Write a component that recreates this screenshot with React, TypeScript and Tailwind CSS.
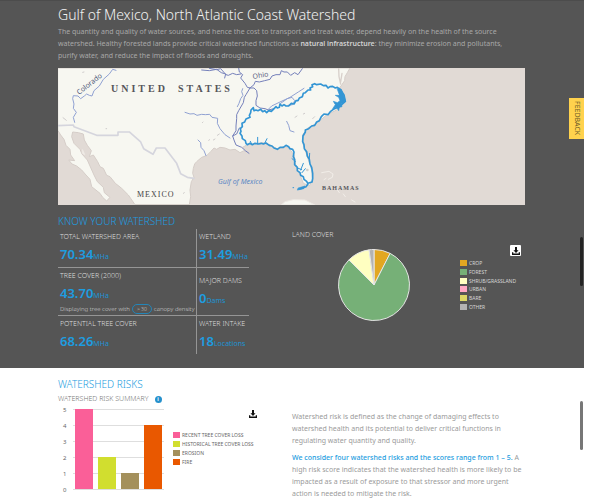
import type { ReactNode } from 'react';

type LegendItem = { label: string; color: string };

const LAND_COVER: LegendItem[] = [
  { label: 'CROP', color: '#e2a722' },
  { label: 'FOREST', color: '#76b077' },
  { label: 'SHRUB/GRASSLAND', color: '#ffffc1' },
  { label: 'URBAN', color: '#ffa8c4' },
  { label: 'BARE', color: '#dbd765' },
  { label: 'OTHER', color: '#b3b3b3' },
];

const RISKS = [
  { label: 'RECENT TREE COVER LOSS', color: '#fa5f98', value: 5 },
  { label: 'HISTORICAL TREE COVER LOSS', color: '#d1de2f', value: 2 },
  { label: 'EROSION', color: '#a4905c', value: 1 },
  { label: 'FIRE', color: '#e95800', value: 4 },
];

const SLICES = [
  { from: 0, to: 27, color: '#e2a722' },
  { from: 27, to: 315, color: '#76b077' },
  { from: 315, to: 352, color: '#ffffc1' },
  { from: 352, to: 360, color: '#b3b3b3' },
];

function slicePath(from: number, to: number) {
  const r = 35.5;
  const point = (deg: number) => {
    const a = (deg * Math.PI) / 180;
    return `${36 + r * Math.sin(a)} ${36 - r * Math.cos(a)}`;
  };
  return `M36 36L${point(from)}A${r} ${r} 0 ${to - from > 180 ? 1 : 0} 1 ${point(to)}Z`;
}

function DownloadIcon() {
  return (
    <svg viewBox="0 0 8 8" className="size-2" aria-hidden="true">
      <path d="M3 0h2v3.2h1.6L4 5.9 1.4 3.2H3z" fill="#111" />
      <path d="M0 5.2h1.3v1.3h5.4V5.2H8V8H0z" fill="#111" />
    </svg>
  );
}

function Legend({ items, className }: { items: LegendItem[]; className: string }) {
  return (
    <ul className={`flex flex-col justify-between text-[5px] leading-[6px] whitespace-nowrap ${className}`}>
      {items.map((item) => (
        <li key={item.label} className="flex items-center gap-0.5">
          <span className="h-1.5 w-[7px]" style={{ backgroundColor: item.color }} />
          {item.label}
        </li>
      ))}
    </ul>
  );
}

function Stat({ label, value, unit, className, children }: { label: string; value: string; unit: string; className: string; children?: ReactNode }) {
  return (
    <div className={`border-[#959595] ${className}`}>
      <h3 className="text-[7px] leading-[10px] font-light whitespace-nowrap text-[#dcdcdc]">{label}</h3>
      <p className="mt-1 text-[13px] leading-4 font-semibold whitespace-nowrap text-[#1d9de0]">
        {value}
        <span className="text-[7px] font-normal text-[#1d94d4]">{unit}</span>
      </p>
      {children}
    </div>
  );
}

function WatershedMap() {
  return (
    <svg viewBox="0 0 467 137" className="block w-full bg-[#e1dad5]" role="img" aria-label="Watershed map">
      <g transform="translate(-8 -8) scale(0.33333)" fill="none" strokeLinejoin="round" strokeLinecap="round">
        <path
          d="M24 24H900L892 38 885 50 884 62 875 75 868 85 885 125 860 150 830 165 800 190 772 205 758 225 760 255 772 290 785 330 788 360 778 378 760 370 750 345 738 320 732 285 715 262 700 260 685 268 660 255 640 248 620 250 590 255 578 262 592 276 582 272 570 278 555 268 540 270 525 264 510 262 500 268 492 264 482 275 470 287 455 292 440 305 434 312 430 325 428 340 432 352 424 365 420 390 422 410 418 434H255L235 405 215 385 196 370 180 350 170 346 160 325 150 320 143 305 130 285 118 290 124 272 112 256 103 240 100 222 85 218 68 216 65 230 72 250 90 268 96 282 112 300 120 318 132 345 142 365 160 382 163 398 180 412 170 423 158 412 150 400 125 380 120 358 108 345 95 330 80 318 66 312 56 300 74 302 62 285 60 268 48 256 42 238 32 225 24 212Z"
          fill="#f7f7f1"
          stroke="#d5cdc8"
          strokeWidth="3"
        />
        <path d="M98 270l6 14-6-4zM695 434l10-9 25-6 35 1 28 14z" fill="#f7f7f1" stroke="#eee9e4" strokeWidth="3" />
        <path d="M815 338l22-4 12 8-2 10-12 6M862 390l6 8M880 402l6 8M905 420l10 6M828 355l-6 4" stroke="#f1ede8" strokeWidth="3" />
        <path d="M866 26l1 24 5 22M876 40l-4 26" stroke="#d8d0cb" strokeWidth="4" />
        <path d="M24 197L70 195 72 200 140 226H204V216H238L272 246 281 266 309 283 319 264H345L380 310 392 341 412 352 432 355" stroke="#d5d5dd" strokeWidth="5" />
        <path d="M39 173l10 8M98 37l4-1M168 206h2M490 240l5-3M502 226l6-4M476 241l3-2M457 188l2-2M400 400l3-2M760 162l4-2M788 176l6-6M735 172l6-4" stroke="#cfcccc" strokeWidth="3" />
        <path
          d="M198 31L188 28 178 42 160 58 148 78 132 92 126 108 118 106 110 102 103 108 92 116 84 108 70 107 68 116 72 132 70 145 79 157 70 172 74 187M405 157L420 162 432 161 441 166 455 163 466 164 479 163 486 172 503 175 502 190 510 206 525 224 540 234M444 240L452 248 453 262 462 272 468 287M578 86L575 95 579 106 572 116 567 130 562 140M710 184L716 196 720 212 732 216M655 148L665 138 690 126 720 112 745 96 762 85M692 130l20-14 14-4 8 10-6 12-14 2"
          stroke="#90a1d2"
          strokeWidth="3"
        />
        <path
          d="M455 30L478 32 500 28 514 38 527 42 524 54M478 25L500 29 512 26 528 44 535 46 548 40 560 44 572 42M566 24L568 36 578 44 572 54 585 70 592 82 600 84 588 104 583 112 580 128 566 152 560 164 560 176 558 198 558 212 548 228 552 240 558 255 575 262 586 272 597 280M600 84L612 74 616 64 628 66 644 62 660 58 666 48 678 44 690 44 694 32 702 36 712 36 722 46 734 38 744 44 757 26M600 84L612 84 620 92 622 108 618 122 618 136 630 144 645 146 655 150 672 146M548 228L560 222 568 204"
          stroke="#7480ba"
          strokeWidth="3"
        />
        <path
          d="M871 88L862 82 856 84 848 79 840 80 834 84 828 76 820 77 812 72 800 74 794 71 786 74 788 80 780 84 782 90 774 90 766 98 760 100 757 110 748 114 744 122 738 122 732 132 724 130 716 138 708 138 702 134 696 138 690 132 688 142 682 144 678 140 670 148 664 154 656 152 650 158 644 152 638 155 632 148 624 152 618 150 612 152 610 143 603 150 602 158 598 166 600 172 588 177 584 186 576 190 577 200 571 206 573 214 570 220 576 228 577 236 586 242 588 250 592 254 600 250 607 254 615 250 626 252 634 250 640 252 648 249 658 256 666 258 672 264 682 268 690 262 700 262 708 256 716 260 720 266 728 268 732 276 730 290 734 298 734 314 742 322 742 332 750 338 752 346 760 350 762 358 770 364 774 372 768 380 758 384 748 387M774 370L786 366 788 356 788 340 785 322 780 312 778 298 772 288 770 275 763 266 762 254 758 245 759 228 766 216 766 210 776 206 785 198 794 196 800 186 808 182 814 170 822 162 834 164 842 154 850 148 868 140 886 124 882 105 871 88"
          stroke="#3395d4"
          strokeWidth="5"
        />
        <path d="M862 86L874 88 880 104 887 124 874 132 876 140 868 142 866 152 860 142 848 146 856 134 850 124 862 128 870 122 866 112 856 106 868 106z" fill="#3395d4" stroke="#3395d4" strokeWidth="2" />
        <path d="M745 384l20-6-4 8-18 4z" fill="#3395d4" stroke="#3395d4" strokeWidth="2" />
        <path d="M623 252V232M645 248l6-12M605 252l-4-8M752 330l8-20M745 325l10 4M756 338l10-12M778 296l1-16M729 383h2M726 296l10 8" stroke="#3395d4" strokeWidth="3" />
        <circle cx="772" cy="330" r="4" fill="#d4d0cc" />
      </g>
      <g className="font-['Liberation_Serif',serif]" fill="#55555a">
        <text y="24" className="text-[10px] font-bold tracking-[3px]">
          <tspan x="53">UNITED</tspan> <tspan x="120">STATES</tspan>
        </text>
        <text x="79" y="129" className="text-[8px] tracking-[1px]" fill="#444">MEXICO</text>
        <text x="264" y="122" className="text-[6px] font-bold tracking-[1px]">BAHAMAS</text>
      </g>
      <g className="font-['Noto_Sans',sans-serif] text-[7px]">
        <text transform="translate(21 27) rotate(-38)" fill="#4c5578">Colorado</text>
        <text transform="translate(195 11) rotate(-10)" fill="#5c6482">Ohio</text>
        <text x="160" y="116" className="italic" fill="#5b87c4">Gulf of Mexico</text>
      </g>
    </svg>
  );
}

function LandCoverPie() {
  return (
    <svg viewBox="0 0 72 72" className="mt-2 ml-[46px] size-[72px]" role="img" aria-label="Land cover shares">
      {SLICES.map((s) => (
        <path key={s.from} d={slicePath(s.from, s.to)} fill={s.color} stroke="#e6e6e6" strokeWidth="1" strokeLinejoin="round" />
      ))}
    </svg>
  );
}

function RiskChart() {
  return (
    <svg viewBox="0 0 108 90" className="h-[90px] w-[108px] text-[6px]" role="img" aria-label="Watershed risk scores">
      {[0, 1, 2, 3, 4, 5].map((n) => (
        <g key={n}>
          <path d={`M15 ${85.5 - n * 16}H106`} stroke="#dedede" />
          <text x="5" y={88 - n * 16} fill="#666">{n}</text>
        </g>
      ))}
      {RISKS.map((risk, i) => (
        <rect key={risk.label} x={17 + i * 23} y={85 - risk.value * 16} width="18" height={risk.value * 16} fill={risk.color} />
      ))}
    </svg>
  );
}

export default function App() {
  return (
    <div className="relative bg-white font-['Noto_Sans',sans-serif]">
      <main className="mr-1.5">
        <section className="border-t border-[#4c4c4c] bg-[#555555] pt-1 pr-[59px] pb-[14px] pl-[58px]">
          <h1 className="text-[14px] leading-5 font-light text-[#f2f2f2]">Gulf of Mexico, North Atlantic Coast Watershed</h1>
          <p className="mt-px max-w-[458px] text-[7px] leading-3 text-[#a8a8a8]">
            The quantity and quality of water sources, and hence the cost to transport and treat water, depend heavily on the health of the source
            watershed. Healthy forested lands provide critical watershed functions as{' '}
            <strong className="font-semibold text-[#d2d2d2]">natural infrastructure</strong>: they minimize erosion and pollutants, purify water, and
            reduce the impact of floods and droughts.
          </p>
          <div className="mt-1.5">
            <WatershedMap />
          </div>

          <div className="mt-2 grid grid-cols-[234px_1fr]">
            <div>
              <h2 className="text-[10px] leading-4 font-light text-[#1d9de0]">KNOW YOUR WATERSHED</h2>
              <div className="grid w-[191px] grid-cols-[139px_1fr] grid-rows-[39px_48px_38px]">
                <Stat className="border-r border-b pt-[3px] pl-0.5" label="TOTAL WATERSHED AREA" value="70.34" unit="MHa" />
                <Stat className="border-b pt-[3px] pl-0.5" label="WETLAND" value="31.49" unit="MHa" />
                <Stat className="border-r border-b pt-[3px] pl-0.5" label="TREE COVER (2000)" value="43.70" unit="MHa">
                  <p className="flex items-center gap-0.5 text-[6px] leading-[10px] font-light whitespace-nowrap text-[#d0d0d0]">
                    Displaying tree cover with
                    <button type="button" className="h-[10px] w-5 rounded-full border border-[#2386b9] text-[5px] leading-[8px]">&gt; 30</button>
                    canopy density
                  </p>
                </Stat>
                <Stat className="border-b pt-2 pl-0.5" label="MAJOR DAMS" value="0" unit="Dams" />
                <Stat className="border-r pt-[3px] pl-0.5" label="POTENTIAL TREE COVER" value="68.26" unit="MHa" />
                <Stat className="pt-[3px] pl-0.5" label="WATER INTAKE" value="18" unit="Locations" />
              </div>
            </div>

            <div className="pt-4">
              <h3 className="text-[7px] leading-3 font-light text-[#dcdcdc]">LAND COVER</h3>
              <div className="flex justify-between">
                <LandCoverPie />
                <div className="flex w-[65px] flex-col">
                  <button type="button" aria-label="Download land cover data" className="mt-1 mr-1 grid size-[11px] place-items-center self-end rounded-[1px] bg-white">
                    <DownloadIcon />
                  </button>
                  <Legend items={LAND_COVER} className="mt-1 h-[50px] text-[#d6d6d6]" />
                </div>
              </div>
            </div>
          </div>
        </section>

        <section className="grid grid-cols-[234px_1fr] pt-2 pr-[58px] pl-[58px]">
          <div>
            <h2 className="text-[10px] leading-4 font-light text-[#1d9de0]">WATERSHED RISKS</h2>
            <div className="mt-0.5 flex items-center gap-1.5">
              <h3 className="text-[7px] leading-[10px] font-light text-[#777]">WATERSHED RISK SUMMARY</h3>
              <button type="button" aria-label="About the risk summary" className="grid size-[7px] place-items-center rounded-full bg-[#2590cc] text-[5px] leading-none font-bold text-white">
                i
              </button>
            </div>
            <div className="flex">
              <RiskChart />
              <div className="ml-[7px] flex w-[84px] flex-col">
                <button type="button" aria-label="Download risk data" className="mt-1.5 self-end">
                  <DownloadIcon />
                </button>
                <Legend items={RISKS} className="mt-[14px] h-[33px] text-[#666]" />
              </div>
            </div>
          </div>
          <div className="flex flex-col gap-[5px] pt-[35px] text-[7px] leading-3 text-[#9a9a9a]">
            <p>
              Watershed risk is defined as the change of damaging effects to watershed health and its potential to deliver critical functions in
              regulating water quantity and quality.
            </p>
            <p>
              <strong className="font-medium text-[#1d9de0]">We consider four watershed risks and the scores range from 1 – 5.</strong> A high risk score
              indicates that the watershed health is more likely to be impacted as a result of exposure to that stressor and more urgent action is needed
              to mitigate the risk.
            </p>
          </div>
        </section>
      </main>

      <button type="button" className="absolute top-[98px] right-1.5 grid h-[41px] w-[15px] place-items-center bg-[#ffd24d] text-[7px] text-[#6b5a28] [writing-mode:vertical-rl]">
        FEEDBACK
      </button>
      <span className="absolute top-[237px] right-[7px] h-[49px] w-[3px] rounded-full bg-[#242424]" />
      <span className="absolute top-[401px] right-[7px] h-[49px] w-[3px] rounded-full bg-[#777777]" />
    </div>
  );
}
